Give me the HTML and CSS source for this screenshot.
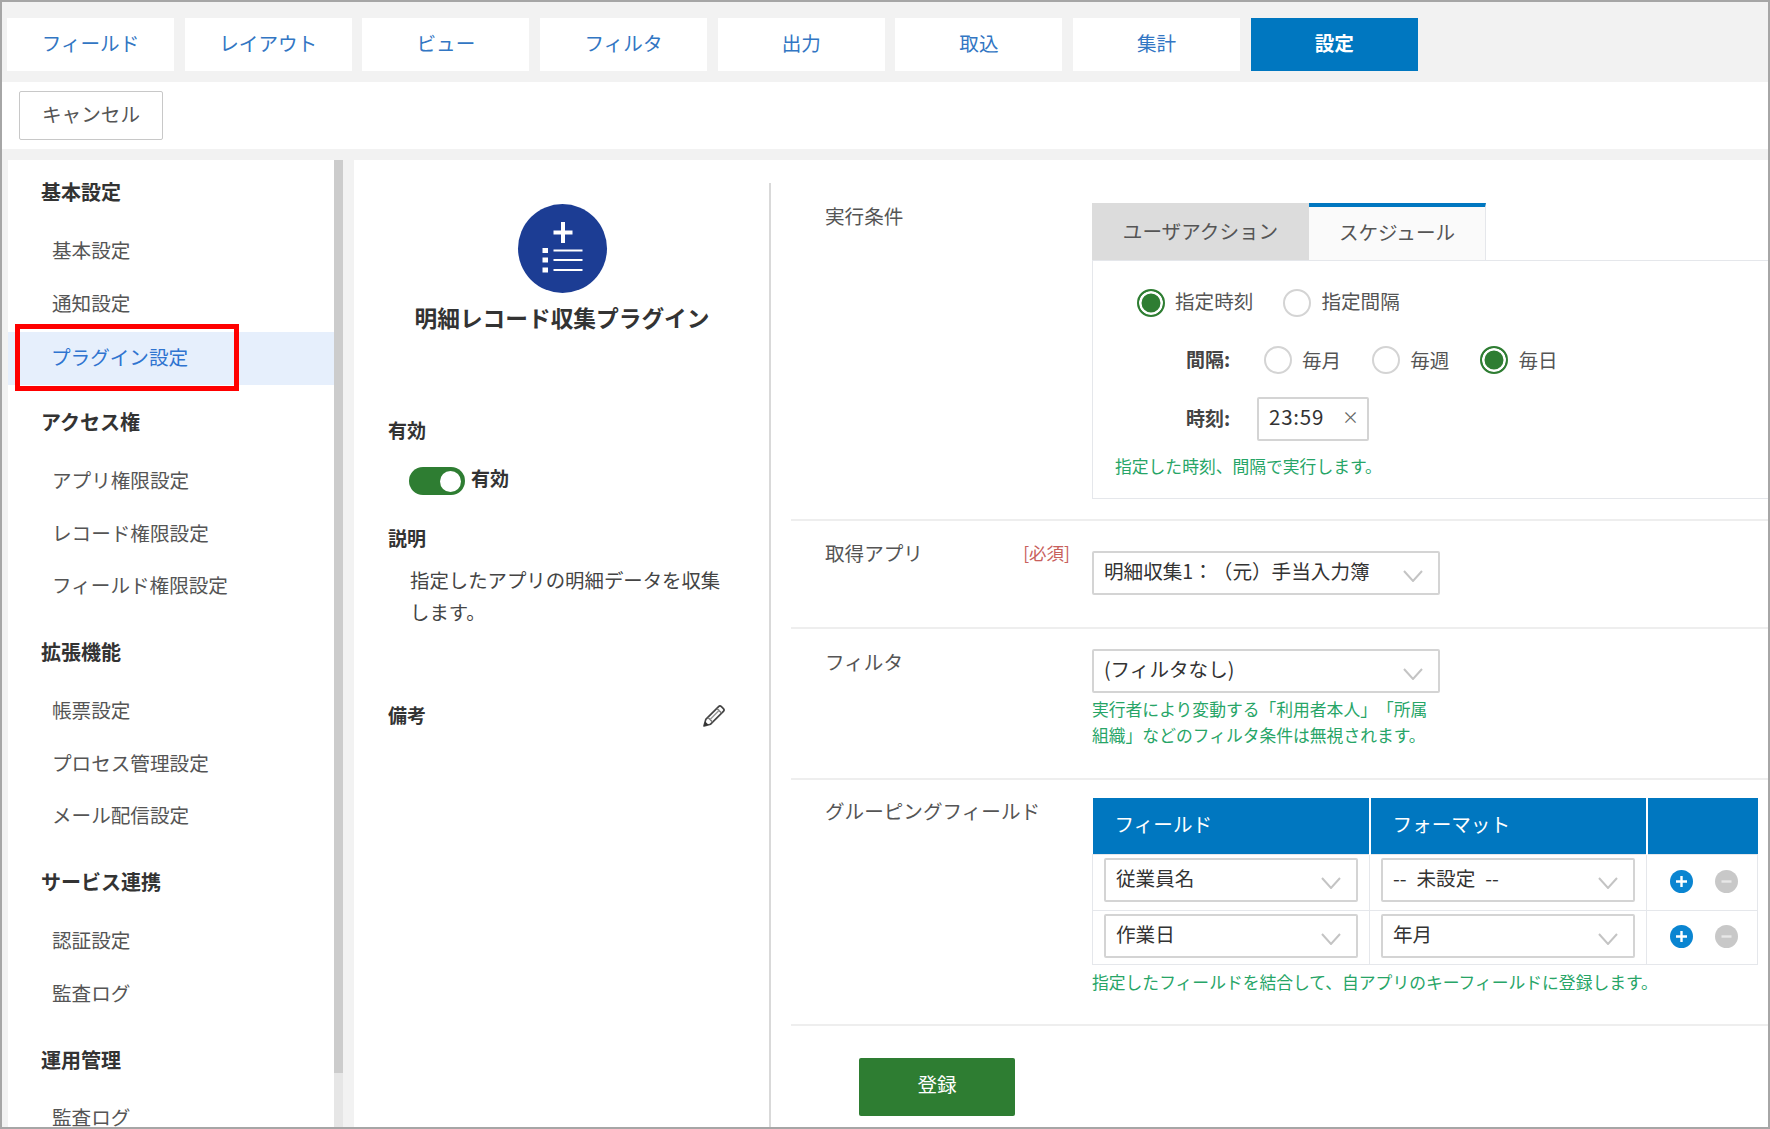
FILE: index.html
```html
<!DOCTYPE html>
<html lang="ja">
<head>
<meta charset="utf-8">
<title>プラグイン設定</title>
<link rel="stylesheet" href="styles.css">
</head>
<body>
<div class="page">
  <nav class="nav">
    <a class="nav-tab">フィールド</a><a class="nav-tab">レイアウト</a><a class="nav-tab">ビュー</a><a class="nav-tab">フィルタ</a><a class="nav-tab">出力</a><a class="nav-tab">取込</a><a class="nav-tab">集計</a><a class="nav-tab nav-tab-active">設定</a>
  </nav>
  <div class="toolbar"><button class="btn-cancel">キャンセル</button></div>
  <div class="content">
    <aside class="sidebar">
      <div class="side-scroll">
        <h3 class="side-head side-head-first">基本設定</h3>
        <a class="side-item">基本設定</a>
        <a class="side-item side-item-tall">通知設定</a>
        <a class="side-item side-item-active">プラグイン設定<span class="redbox"></span></a>
        <h3 class="side-head side-head-tight">アクセス権</h3>
        <a class="side-item">アプリ権限設定</a>
        <a class="side-item">レコード権限設定</a>
        <a class="side-item">フィールド権限設定</a>
        <h3 class="side-head">拡張機能</h3>
        <a class="side-item">帳票設定</a>
        <a class="side-item">プロセス管理設定</a>
        <a class="side-item">メール配信設定</a>
        <h3 class="side-head">サービス連携</h3>
        <a class="side-item">認証設定</a>
        <a class="side-item">監査ログ</a>
        <h3 class="side-head">運用管理</h3>
        <a class="side-item">監査ログ</a>
      </div>
      <div class="scrollbar"><div class="scroll-thumb"></div></div>
    </aside>
    <main class="main">
      <section class="plugin">
        <div class="plugin-icon">
          <svg width="89" height="89" viewBox="0 0 89 89" fill="none">
            <path d="M45 18v21M35.500 28.500h19" stroke="#fff" stroke-width="4"/>
            <rect x="24.500" y="44" width="5.500" height="5" fill="#fff"/><rect x="24.500" y="53.500" width="5.500" height="5" fill="#fff"/><rect x="24.500" y="63.500" width="5.500" height="5" fill="#fff"/>
            <path d="M35.500 46.500h29M35.500 56h29M35.500 66h29" stroke="#fff" stroke-width="2"/>
          </svg>
        </div>
        <h2 class="plugin-title">明細レコード収集プラグイン</h2>
        <div class="field-label label-enabled">有効</div>
        <div class="toggle-row"><span class="toggle"><span class="knob"></span></span><span class="toggle-text">有効</span></div>
        <div class="field-label label-desc">説明</div>
        <p class="desc">指定したアプリの明細データを収集します。</p>
        <div class="note-row">
          <div class="field-label">備考</div>
          <svg class="pencil" width="24" height="24" viewBox="0 0 24 24" fill="none">
            <path d="M2 22l1.800-6.600L16.600 2.600a2 2 0 0 1 2.800 0l2 2a2 2 0 0 1 0 2.800L8.600 20.200z" stroke="#444" stroke-width="1.700" stroke-linejoin="round"/>
            <path d="M6 13.500l4.500 4.500M15 4.500l4.500 4.500" stroke="#777" stroke-width="1.400"/>
            <path d="M7.800 15.800L17.500 6.100" stroke="#999" stroke-width="1.400"/>
            <path d="M2 22l1.200-4.500 3.300 3.300z" fill="#333"/>
          </svg>
        </div>
      </section>
      <section class="form">
        <div class="row row-exec">
          <div class="row-label">実行条件</div>
          <div class="row-control">
            <div class="tabs"><div class="tab">ユーザアクション</div><div class="tab tab-active">スケジュール</div></div>
            <div class="tab-panel">
              <div class="opt-row opt-row-main">
                <span class="option"><span class="radio radio-on"></span><span class="opt-text">指定時刻</span></span>
                <span class="option"><span class="radio"></span><span class="opt-text">指定間隔</span></span>
              </div>
              <div class="opt-row opt-row-sub">
                <span class="sub-label sub-label-wide">間隔:</span>
                <span class="option"><span class="radio"></span><span class="opt-text">毎月</span></span>
                <span class="option"><span class="radio"></span><span class="opt-text">毎週</span></span>
                <span class="option"><span class="radio radio-on"></span><span class="opt-text">毎日</span></span>
              </div>
              <div class="opt-row opt-row-sub opt-row-time">
                <span class="sub-label">時刻:</span>
                <span class="time-input">23:59<span class="time-clear">×</span></span>
              </div>
              <p class="hint hint-panel">指定した時刻、間隔で実行します。</p>
            </div>
          </div>
        </div>
        <div class="row row-app">
          <div class="row-label label-with-req">取得アプリ<span class="req">[必須]</span></div>
          <div class="row-control">
            <div class="select select-wide"><span>明細収集1：（元）手当入力簿</span><svg class="chev" width="20" height="12" viewBox="0 0 20 12" fill="none"><path d="M1 1l9 10 9-10" stroke="#c4c4c4" stroke-width="2"/></svg></div>
          </div>
        </div>
        <div class="row row-filter">
          <div class="row-label">フィルタ</div>
          <div class="row-control">
            <div class="select select-wide"><span>(フィルタなし)</span><svg class="chev" width="20" height="12" viewBox="0 0 20 12" fill="none"><path d="M1 1l9 10 9-10" stroke="#c4c4c4" stroke-width="2"/></svg></div>
            <p class="hint hint-filter">実行者により変動する「利用者本人」「所属<br>組織」などのフィルタ条件は無視されます。</p>
          </div>
        </div>
        <div class="row row-group">
          <div class="row-label">グルーピングフィールド</div>
          <div class="row-control">
            <table class="grid">
              <thead><tr><th class="col-a">フィールド</th><th class="col-b">フォーマット</th><th></th></tr></thead>
              <tbody>
                <tr>
                  <td><div class="select"><span>従業員名</span><svg class="chev" width="20" height="12" viewBox="0 0 20 12" fill="none"><path d="M1 1l9 10 9-10" stroke="#c4c4c4" stroke-width="2"/></svg></div></td>
                  <td><div class="select"><span>-- 未設定 --</span><svg class="chev" width="20" height="12" viewBox="0 0 20 12" fill="none"><path d="M1 1l9 10 9-10" stroke="#c4c4c4" stroke-width="2"/></svg></div></td>
                  <td class="actions"><span class="round round-add"><svg width="13" height="13" viewBox="0 0 13 13"><path d="M6.500 1v11M1 6.500h11" stroke="#fff" stroke-width="2.400"/></svg></span><span class="round round-del"><svg width="13" height="13" viewBox="0 0 13 13"><path d="M1.500 6.500h10" stroke="#e8e8e8" stroke-width="2.400"/></svg></span></td>
                </tr>
                <tr>
                  <td><div class="select"><span>作業日</span><svg class="chev" width="20" height="12" viewBox="0 0 20 12" fill="none"><path d="M1 1l9 10 9-10" stroke="#c4c4c4" stroke-width="2"/></svg></div></td>
                  <td><div class="select"><span>年月</span><svg class="chev" width="20" height="12" viewBox="0 0 20 12" fill="none"><path d="M1 1l9 10 9-10" stroke="#c4c4c4" stroke-width="2"/></svg></div></td>
                  <td class="actions actions-last"><span class="round round-add"><svg width="13" height="13" viewBox="0 0 13 13"><path d="M6.500 1v11M1 6.500h11" stroke="#fff" stroke-width="2.400"/></svg></span><span class="round round-del"><svg width="13" height="13" viewBox="0 0 13 13"><path d="M1.500 6.500h10" stroke="#e8e8e8" stroke-width="2.400"/></svg></span></td>
                </tr>
              </tbody>
            </table>
            <p class="hint hint-grid">指定したフィールドを結合して、自アプリのキーフィールドに登録します。</p>
          </div>
        </div>
        <div class="form-foot"><button class="btn-submit">登録</button></div>
      </section>
    </main>
  </div>
</div>
</body>
</html>
```

FILE: styles.css
```css
* { box-sizing: border-box; }
html, body { margin: 0; padding: 0; }
body {
  width: 1770px;
  height: 1129px;
  overflow: hidden;
  background: #f2f2f2;
  color: #333;
  font-family: "Noto Sans CJK JP", "Noto Sans", sans-serif;
  font-size: 19.600px;
  text-spacing-trim: space-all;
}
h2, h3, p { margin: 0; }
.page {
  width: 1770px;
  height: 1129px;
  border: 2px solid #a6a6a6;
  display: flex;
  flex-direction: column;
  overflow: hidden;
  background: #f2f2f2;
}

/* top navigation */
.nav {
  height: 80px;
  flex: none;
  padding: 16px 0 0 5px;
  display: flex;
  gap: 10.700px;
}
.nav-tab {
  width: 167px;
  height: 53px;
  background: #fff;
  color: #3276c3;
  display: flex;
  align-items: center;
  justify-content: center;
  padding-bottom: 5px;
}
.nav-tab-active { background: #0077c0; color: #fff; font-weight: 700; }

.toolbar {
  height: 67px;
  flex: none;
  background: #fff;
  padding: 9px 0 0 17px;
}
.btn-cancel {
  width: 144px;
  height: 49px;
  background: #fff;
  border: 1px solid #c8c8c8;
  border-radius: 2px;
  color: #555;
  font: inherit;
  padding: 0 0 5px;
}

/* body */
.content {
  flex: 1;
  min-height: 0;
  display: flex;
  padding: 11px 0 0 6px;
}
.sidebar {
  width: 335px;
  flex: none;
  display: flex;
  background: #fff;
  overflow: hidden;
}
.side-scroll { width: 326px; flex: none; }
.side-head {
  height: 65px;
  margin-top: 7px;
  padding: 0 0 2px 33px;
  display: flex;
  align-items: center;
  font-size: 20px;
  font-weight: 700;
  color: #333;
}
.side-head-first { margin-top: 0; }
.side-head-tight { margin-top: 5.400px; }
.side-item {
  height: 52.700px;
  padding: 0 0 4px 44px;
  display: flex;
  align-items: center;
  color: #555;
  position: relative;
}
.side-item-tall { height: 54.300px; padding-bottom: 5.600px; }
.side-item-active { background: #e6effc; color: #2f74d0; padding-bottom: 4px; padding-left: 43px; }
.redbox {
  position: absolute;
  left: 7px;
  top: -8px;
  width: 224px;
  height: 67px;
  border: 5px solid #f00;
}
.scrollbar { width: 9px; flex: none; background: #e6e6e6; }
.scroll-thumb { height: 913px; background: #ccc; }

.main {
  flex: 1;
  min-width: 0;
  margin-left: 11px;
  background: #fff;
  display: flex;
  padding-top: 23px;
}

/* plugin column */
.plugin {
  width: 417px;
  flex: none;
  border-right: 2px solid #d9d9d9;
  padding: 21px 43px 0 34px;
}
.plugin-icon {
  width: 89px;
  height: 89px;
  margin-left: 130px;
  border-radius: 50%;
  background: #1c3d94;
}
.plugin-title {
  width: 348px;
  margin: 10px 0 1px 0;
  height: 30px;
  line-height: 30px;
  text-align: center;
  font-size: 22.700px;
  font-weight: 700;
  white-space: nowrap;
}
.field-label {
  height: 28px;
  line-height: 26px;
  font-size: 19px;
  font-weight: 700;
}
.label-enabled { margin-top: 84px; }
.toggle-row {
  display: flex;
  align-items: center;
  margin: 22px 0 0 21px;
  height: 28px;
  gap: 6px;
  font-weight: 700;
  font-size: 19px;
}
.toggle-text { margin-top: -7px; }
.toggle {
  width: 56px;
  height: 28px;
  border-radius: 14px;
  background: #2e7d32;
  display: flex;
  align-items: center;
  justify-content: flex-end;
  padding-right: 4px;
}
.knob { width: 21px; height: 21px; border-radius: 50%; background: #fff; }
.label-desc { margin-top: 30px; }
.desc {
  margin: 11px 0 0 22px;
  line-height: 32px;
  color: #444;
  font-size: 19.400px;
}
.note-row {
  margin-top: 74px;
  display: flex;
  align-items: center;
  justify-content: space-between;
}

/* form column */
.form { flex: 1; min-width: 0; margin-left: 20px; overflow: hidden; }
.row {
  display: grid;
  grid-template-columns: 267px 1fr;
  border-bottom: 2px solid #eeeeee;
  padding-left: 34px;
}
.row-label { color: #555; line-height: 26px; white-space: nowrap; }
.row-control { min-width: 0; }
.row-exec { padding-top: 20px; padding-bottom: 20px; height: 338px; }
.row-app { padding-top: 30px; height: 108px; }
.row-filter { padding-top: 20px; height: 151px; }
.row-group { padding-top: 18px; height: 246px; }
.label-with-req {
  display: flex;
  justify-content: space-between;
  padding-right: 22px;
  margin-top: -11px;
}
.req { color: #c8605c; font-size: 17.500px; }

.tabs { display: flex; height: 57px; }
.tab {
  width: 217px;
  background: #dcdcdc;
  color: #555;
  display: flex;
  align-items: center;
  justify-content: center;
  padding-bottom: 2px;
  white-space: nowrap;
}
.tab-active {
  width: 177px;
  background: #fafafa;
  border-top: 4px solid #0077c0;
  border-right: 1px solid #e5e7eb;
  padding-bottom: 5px;
}
.tab-panel {
  height: 239px;
  border: 1px solid #e5e7eb;
  border-right: 0;
  padding: 28px 0 0 22px;
}
.opt-row { display: flex; align-items: center; }
.opt-row-main { margin-left: 22px; height: 28px; gap: 30px; }
.opt-row-sub { margin: 29px 0 0 71px; height: 28px; gap: 31px; font-weight: 400; }
.opt-row-time { margin-top: 23px; height: 44px; gap: 0; }
.option { display: inline-flex; align-items: center; gap: 10px; color: #555; }
.opt-text { margin-top: -6px; }
.opt-row-sub .opt-text { margin-top: -2px; }
.radio {
  width: 28px;
  height: 28px;
  border-radius: 50%;
  border: 2px solid #d4d4d4;
  background: #fff;
  display: inline-block;
  flex: none;
}
.radio-on {
  border-color: #2e7d32;
  background: #2e7d32;
  box-shadow: inset 0 0 0 2.500px #fff;
}
.sub-label { width: 71px; font-weight: 700; color: #444; margin-top: -4px; font-size: 19px; }
.sub-label-wide { width: 49px; margin-right: -2px; }
.time-input {
  width: 112px;
  height: 44px;
  border: 2px solid #d4d4d4;
  border-radius: 2px;
  display: flex;
  align-items: center;
  padding: 0 0 6px 10px;
  justify-content: space-between;
  font-size: 20.500px;
  letter-spacing: 0.800px;
  color: #333;
}
.time-clear { color: #666; font-size: 17px; margin-right: 8px; letter-spacing: 0; }
.hint { color: #27a567; font-size: 16.800px; }
.hint-panel { margin-top: 13px; line-height: 24px; }
.hint-filter { margin-top: 3px; line-height: 26px; white-space: nowrap; }
.hint-grid { margin-top: 5px; line-height: 24px; white-space: nowrap; }

.select {
  height: 44px;
  border: 2px solid #d4d4d4;
  border-radius: 2px;
  background: #fff;
  display: flex;
  align-items: center;
  justify-content: space-between;
  padding: 0 15px 0 10px;
  color: #333;
}
.select > span { margin-top: -5px; word-spacing: 5.500px; }
.select-wide { width: 348px; }
.chev { margin-top: 6px; }

.grid {
  width: 666px;
  border-collapse: collapse;
  table-layout: fixed;
}
.grid th {
  height: 56px;
  background: #0077c0;
  color: #fff;
  font-weight: 400;
  text-align: left;
  padding: 0 0 5px 22px;
  border-left: 2px solid #fff;
}
.grid th:first-child { border-left: 0; }
.col-a { width: 277px; }
.col-b { width: 277px; }
.grid td {
  border: 1px solid #e5e7eb;
  padding: 3px 11px 8px 11px;
  height: 56px;
}
.grid tbody tr:last-child td { padding-bottom: 5px; height: 54px; }
.actions { white-space: nowrap; }
.grid td.actions { padding: 0 0 8px 23px; }
.grid tbody tr:last-child td.actions-last { padding-bottom: 8px; }
.round {
  display: inline-flex;
  width: 23px;
  height: 23px;
  border-radius: 50%;
  align-items: center;
  justify-content: center;
  vertical-align: middle;
}
.round-add { background: #0a85d1; margin-right: 22px; }
.round-del { background: #c8c8c8; }

.form-foot { padding: 32px 0 0 68px; }
.btn-submit {
  width: 156px;
  height: 58px;
  background: #2e7d32;
  color: #fff;
  border: 0;
  border-radius: 2px;
  font: inherit;
  padding: 0 0 7px;
}
```
